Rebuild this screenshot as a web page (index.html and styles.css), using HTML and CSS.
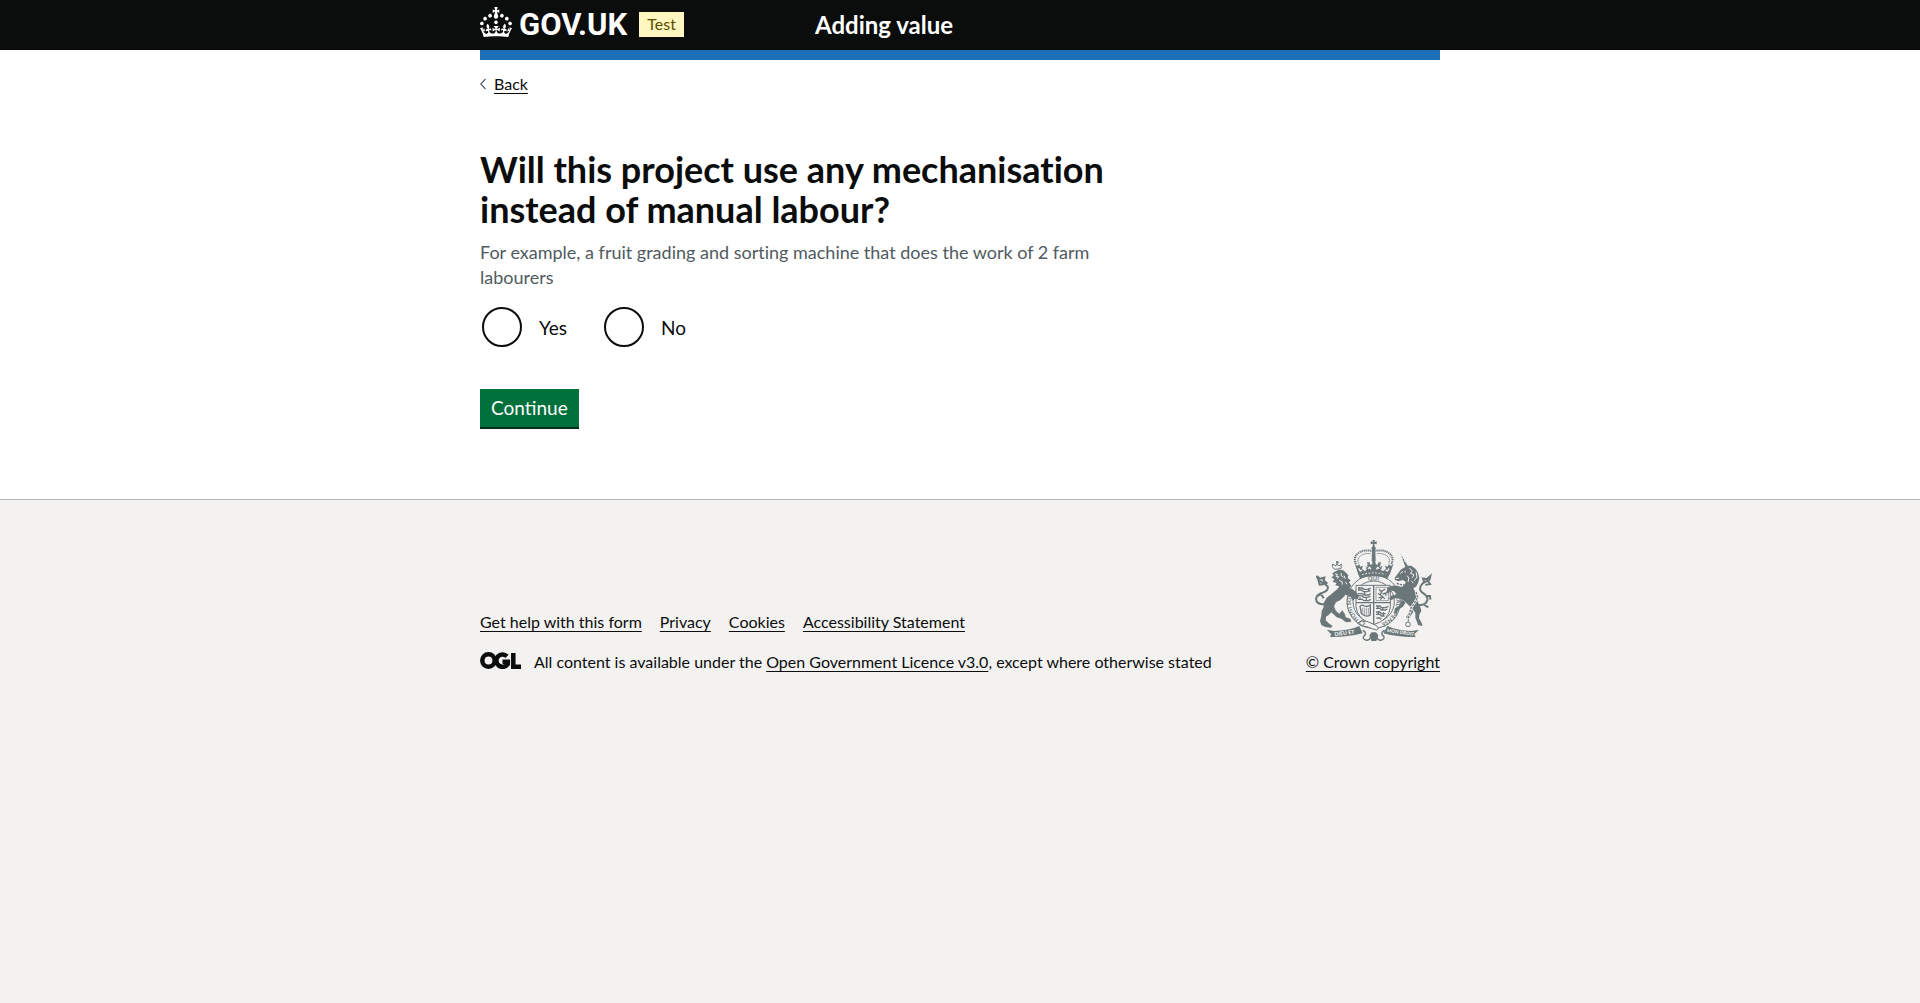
FILE: index.html
```html
<!DOCTYPE html>
<html lang="en">
<head>
  <meta charset="utf-8">
  <meta name="viewport" content="width=device-width, initial-scale=1">
  <title>Will this project use any mechanisation instead of manual labour? - Adding value - GOV.UK</title>
  <link rel="stylesheet" href="styles.css">
</head>
<body>
  <header class="header">
    <div class="container header-bar">
      <div class="header-logo">
        <a class="logo" href="#">
          <svg class="logo-crown" viewBox="0 0 32 30" width="32" height="30" aria-hidden="true"><path fill="currentColor" d="M22.6 10.4c-1 .4-2-.1-2.4-1-.4-.9.1-2 1-2.4.9-.4 2 .1 2.4 1s-.1 2-1 2.4m-5.9 6.7c-.9.4-2-.1-2.4-1-.4-.9.1-2 1-2.4.9-.4 2 .1 2.4 1s-.1 2-1 2.4m10.8-3.7c-1 .4-2-.1-2.4-1-.4-.9.1-2 1-2.4.9-.4 2 .1 2.4 1s0 2-1 2.4m3.3 4.8c-1 .4-2-.1-2.4-1-.4-.9.1-2 1-2.4.9-.4 2 .1 2.4 1s-.1 2-1 2.4M17 4.7l2.3 1.2V2.5l-2.3.7-.2-.2.9-3h-3.4l.9 3-.2.2c-.1.1-2.3-.7-2.3-.7v3.4L15 4.7c.1.1.1.2.2.2l-1.3 4c-.1.2-.1.4-.1.6 0 1.1.8 2 1.9 2.2h.7c1-.2 1.9-1.1 1.9-2.1 0-.2 0-.4-.1-.6l-1.3-4c-.1-.2 0-.2.1-.3m-7.6 5.7c.9.4 2-.1 2.4-1 .4-.9-.1-2-1-2.4-.9-.4-2 .1-2.4 1s0 2 1 2.4m-5 3c.9.4 2-.1 2.4-1 .4-.9-.1-2-1-2.4-.9-.4-2 .1-2.4 1s.1 2 1 2.4m-3.2 4.8c.9.4 2-.1 2.4-1 .4-.9-.1-2-1-2.4-.9-.4-2 .1-2.4 1s0 2 1 2.4m14.8 11c4.4 0 8.6.3 12.3.8 1.1-4.5 2.4-7 3.7-8.8l-2.5-.9c.2 1.3.3 1.9 0 2.7-.4-.4-.8-1.1-1.1-2.3l-1.2 4c.7-.5 1.3-.8 2-.9-1.1 2.5-2.6 3.1-3.5 3-1.1-.2-1.7-1.2-1.5-2.1.3-1.2 1.5-1.5 2.1-.1 1.1-2.3-.8-3-2-2.3 1.9-1.9 2.1-3.5.6-5.6-2.1 1.6-2.1 3.2-1.2 5.5-1.2-1.4-3.2-.6-2.5 1.6.9-1.4 2.1-.5 1.9.8-.2 1.1-1.7 2.1-3.5 1.9-2.7-.2-2.9-2.1-2.9-3.6.7-.1 1.9.5 2.9 1.9l.4-4.3c-1.1 1.1-2.1 1.4-3.2 1.4.4-1.2 2.1-3 2.1-3h-5.4s1.7 1.9 2.1 3c-1.1 0-2.1-.2-3.2-1.4l.4 4.3c1-1.4 2.2-2 2.9-1.9-.1 1.5-.2 3.4-2.9 3.6-1.9.2-3.4-.8-3.5-1.9-.2-1.3 1-2.2 1.9-.8.7-2.3-1.2-3-2.5-1.6.9-2.2.9-3.9-1.2-5.5-1.5 2-1.3 3.7.6 5.6-1.2-.7-3.1 0-2 2.3.6-1.4 1.8-1.1 2.1.1.2.9-.3 1.9-1.5 2.1-.9.2-2.4-.5-3.5-3 .6 0 1.2.3 2 .9l-1.2-4c-.3 1.1-.7 1.9-1.1 2.3-.3-.8-.2-1.4 0-2.7l-2.9.9C1.3 23 2.6 25.5 3.7 30c3.7-.5 7.9-.8 12.3-.8"/></svg>
          <span class="logo-text">GOV.UK</span>
        </a>
        <strong class="tag">Test</strong>
      </div>
      <a class="service-name" href="#">Adding value</a>
    </div>
  </header>

  <div class="container">
    <div class="brand-bar"></div>
    <a class="back-link" href="#">
      <svg width="6" height="12" viewBox="0 0 6 12" aria-hidden="true"><path d="M5.5 1 .8 6l4.700 5" fill="none" stroke="#505a5f" stroke-width="1.100"/></svg>
      <span class="link">Back</span>
    </a>
    <main class="main">
      <form class="question" action="#" method="post">
        <fieldset class="fieldset" aria-describedby="hint">
          <legend class="legend"><h1 class="heading">Will this project use any mechanisation instead of manual labour?</h1></legend>
          <p class="hint" id="hint">For example, a fruit grading and sorting machine that does the work of 2 farm labourers</p>
          <div class="radios">
            <div class="radio">
              <input class="radio-input" type="radio" id="yes" name="mechanisation" value="yes">
              <label class="radio-label" for="yes">Yes</label>
            </div>
            <div class="radio">
              <input class="radio-input" type="radio" id="no" name="mechanisation" value="no">
              <label class="radio-label" for="no">No</label>
            </div>
          </div>
        </fieldset>
        <button class="button" type="submit">Continue</button>
      </form>
    </main>
  </div>

  <footer class="footer">
    <div class="container footer-meta">
      <div class="footer-main">
        <ul class="footer-links">
          <li><a class="link" href="#">Get help with this form</a></li>
          <li><a class="link" href="#">Privacy</a></li>
          <li><a class="link" href="#">Cookies</a></li>
          <li><a class="link" href="#">Accessibility Statement</a></li>
        </ul>
        <div class="licence">
          <svg class="ogl" viewBox="0 0 41 17" width="41" height="17" role="img" aria-label="Open Government Licence">
            <g fill="none" stroke="currentColor" stroke-width="4.500">
              <circle cx="8.500" cy="8.500" r="6.200"/>
              <path d="M27 4.300A6.200 6.200 0 1 0 27.800 12V9.800H22.500"/>
              <path d="M33.300 1v13.700H41"/>
            </g>
          </svg>
          <p class="licence-text">All content is available under the <a class="link" href="#">Open Government Licence v3.0</a>, except where otherwise stated</p>
        </div>
      </div>
      <a class="copyright" href="#">
        <svg class="crest" viewBox="66 45 375 306" width="125" height="102" aria-hidden="true">
          <defs>
            <path id="garter-left" d="M232 294A68 68 0 0 1 208 183"/>
            <path id="garter-top" d="M214 181A68 68 0 0 1 300 181"/>
            <path id="garter-right" d="M315 195A68 68 0 0 1 275 296"/>
          </defs>
          <!-- garter and shield -->
          <g fill="none" stroke="currentColor">
            <circle cx="257" cy="230" r="80" stroke-width="3"/>
            <circle cx="257" cy="230" r="62" stroke-width="3"/>
            <path d="M204 181H307V245Q304 285 257 299Q208 285 204 245Z" fill="#f3f2f1" stroke-width="3"/>
            <path d="M257 181V299M204 233H307" stroke-width="4"/>
            <path d="M264 187H301V227H264Z" stroke-width="2"/>
            <path d="M210 189h13l5 4h14l6-4M210 195h11l5 5h12l9-3M210 206h13l5 4h14l6-4M210 212h11l5 5h12l9-3M210 223h13l5 4h14l6-4M213 186v8M230 200v8M242 190v8M216 217v8M235 220v8" stroke-width="4"/>
            <path d="M264 243h12l4 5h13l8-4M264 250h11l5 5h12l6-3M264 261h12l4 5h13M264 268h11l5 5h10M265 279h10l5 4M270 241v8M284 246v8M271 258v9M286 262v10" stroke-width="4"/>
            <path d="M216 244Q222 237 229 243Q238 247 247 240V270Q233 279 220 265Z" stroke-width="4"/>
            <path d="M223 248V266M229 248V270M235 250V271M241 249V269" stroke-width="2"/>
            <path d="M273 193l8 8l-5 8l8 6l-7 9M279 200l13-8M284 207l10-3l-1 8M280 213l11 8M270 206l7 3M271 219l8-3" stroke-width="4"/>
          </g>
          <g fill="currentColor" font-family="Lato, sans-serif" font-weight="700" font-size="17">
            <text><textPath href="#garter-left" startOffset="22">HONI SOIT</textPath></text>
            <text><textPath href="#garter-top" startOffset="30">QUI</textPath></text>
            <text><textPath href="#garter-right" startOffset="14">MAL Y PENSE</textPath></text>
          </g>
          <path d="M208 294Q220 284 237 289L263 301Q278 309 265 315Q250 311 240 306L219 302Z" fill="#f3f2f1" stroke="currentColor" stroke-width="3"/>
          <circle cx="222" cy="294" r="7" fill="none" stroke="currentColor" stroke-width="3"/>
          <!-- royal crown -->
          <g fill="currentColor">
            <path d="M211 147Q257 133 304 147L299 161Q257 147 216 161Z"/>
            <path d="M211 149L201 118l8 5 4-7 4 9 8-3-3 9 7 7 7-10-4-3 7-6-2-7h8l1 7 7-1v-7h10v7l7 1 1-7h8l-2 7 7 6-4 3 7 10 7-7-3-9 8 3 4-9 4 7 9-5-11 31Q257 132 211 149Z"/>
            <path d="M253 45h8l-2 6 7-2v9l-7-2 1 8q6 5 2 11l1 32-6 8-6-8 1-32q-4-6 2-11l1-8-7 2v-9l7 2Z"/>
          </g>
          <g fill="none" stroke="currentColor">
            <path d="M204 117C190 92 218 70 252 78M310 117C324 92 296 70 262 78" stroke-width="6" stroke-dasharray="4 2"/>
            <path d="M212 115C202 97 225 82 248 86M302 115C312 97 289 82 266 86" stroke-width="2"/>
          </g>
          <path d="M222 149Q257 139 292 149" fill="none" stroke="#f3f2f1" stroke-width="3" stroke-dasharray="5 5"/>
          <path d="M212 130l5 8 5-3M240 131l5-4 4 6M303 130l-5 8-5-3M274 131l-5-4-4 6M233 120l5 5M281 120l-5 5M229 137l6-5M285 137l-6-5" fill="none" stroke="#f3f2f1" stroke-width="4"/>
          <!-- lion -->
          <g fill="currentColor">
            <path d="M140 140L152 134 166 136 174 143 181 151 179 159 188 166 183 172 190 182 184 190 194 193 207 204 213 213 209 223 199 221 194 227 187 214 172 209 168 215 156 226 144 232 138 244 144 258 154 266 163 256 171 268 173 277 187 281 190 290 174 292 160 281 146 277 130 262 122 270 114 275 113 286 122 295 134 303 129 308 112 306 100 300 96 288 100 272 101 258 107 246 106 236 116 218 134 204 148 192 154 184 142 181 146 173 134 171 139 163 130 157 137 152 133 145Z"/>
            <circle cx="148" cy="112" r="4"/>
          </g>
          <path d="M134 117l9 6 4-7 5 7 8-6-1 14-20 2-6-8Z" fill="none" stroke="currentColor" stroke-width="3"/>
          <path d="M140 147l9 1-5 6 8 1-4 6M159 144l1 8 6 5M168 152l4 9M154 166l9 5-1 8M172 171l5 7" fill="none" stroke="#f3f2f1" stroke-width="3"/>
          <path d="M110 238Q85 239 84 221Q87 207 104 203Q124 196 119 184Q110 174 95 168M93 168l-7-15 10 8 13-3-2 8 11 10M92 168l3 11 12-1M84 215l16-8M101 210l6 10" fill="none" stroke="currentColor" stroke-width="6"/>
          <!-- unicorn -->
          <g fill="currentColor">
            <path d="M352 125L337 85 359 122 370 122 382 131 390 143 394 160 390 175 384 185 376 190 382 202 386 218 390 232 397 246 400 257 394 269 393 280 400 292 404 303 390 300 386 288 382 278 382 264 374 252 362 241 350 229 336 221 322 219 309 226 303 221 309 213 326 208 318 199 308 196 301 206 295 202 299 187 312 182 328 182 340 186 350 180 353 170 344 165 332 169 321 165 320 158 329 147 338 134Z"/>
            <path d="M341 224L353 232 345 245 330 254 326 266 318 264 321 250 336 240Z"/>
            <path d="M368 246L376 260 366 276 358 282 354 276 363 264Z"/>
          </g>
          <path d="M339 93l6-3M343 101l7-3M347 109l7-3M337 146l8-7M349 140l5 1M364 129l9 9-6 7 11 4-5 9M384 141l3 15-8 11M357 152l6 7-3 12M324 161l9-2M370 168l8 8" fill="none" stroke="#f3f2f1" stroke-width="3"/>
          <path d="M393 240Q414 241 418 225Q420 213 403 203Q390 192 401 179Q407 171 424 166M424 166l3-13-10 9-12-1 3 8M420 169l6 8-14 2M415 212l11 1 1 11M409 240l12 7" fill="none" stroke="currentColor" stroke-width="6"/>
          <path d="M384 201l5 16-9 16-11 16-6 20-2 20" fill="none" stroke="#f3f2f1" stroke-width="8"/>
          <path d="M326 175l17 5 20-1 17-3M384 201l5 16-9 16-11 16-6 20-2 20" fill="none" stroke="currentColor" stroke-width="4" stroke-dasharray="7 3"/>
          <circle cx="360" cy="298" r="7" fill="#f3f2f1" stroke="currentColor" stroke-width="3"/>
          <!-- motto scroll -->
          <path d="M116 314L138 318Q185 316 214 303L224 325Q170 338 126 336L130 328ZM393 314L371 318Q326 316 298 303L286 325Q338 338 383 336L379 328Z" fill="currentColor"/>
          <g fill="#f3f2f1" font-family="Lato, sans-serif" font-weight="900">
            <text x="140" y="334" transform="rotate(-8 140 334)" font-size="16">DIEU ET</text>
            <text x="296" y="321" transform="rotate(8 296 321)" font-size="14">MON DROIT</text>
          </g>
          <path d="M224 316q10 3 8 13q-9 6-5 12q8 8 17 2l8-14h10l8 14q9 6 17-2q4-6-5-12q-2-10 8-13" fill="none" stroke="currentColor" stroke-width="4"/>
          <path d="M244 331l7-9h13l7 9-6 17h-15Z" fill="currentColor"/>
        </svg>
        <span class="link">© Crown copyright</span>
      </a>
    </div>
  </footer>
</body>
</html>
```
FILE: styles.css
```css
* {
  box-sizing: border-box;
}

html {
  background: #f3f2f1;
}

body {
  margin: 0;
  background: #fff;
  color: #0b0c0c;
  font-family: Lato, "Liberation Sans", sans-serif;
  font-size: 16px;
  font-variant-ligatures: none;
  line-height: 20px;
}

a {
  color: inherit;
  text-decoration: none;
}

.link {
  text-decoration: underline;
  text-decoration-thickness: 1px;
  text-decoration-skip-ink: none;
  text-underline-offset: 3px;
}

.container {
  max-width: 960px;
  margin: 0 auto;
}

.header {
  background: #0b0c0c;
  color: #fff;
}

.header-bar {
  display: grid;
  grid-template-columns: 335px 1fr;
  align-items: center;
  min-height: 50px;
}

.header-logo,
.logo {
  display: flex;
  align-items: center;
}

.header-logo {
  gap: 12px;
}

.logo {
  gap: 7px;
}

.logo-crown {
  margin-bottom: 6px;
}

.logo-text {
  font-family: Roboto, sans-serif;
  font-size: 31px;
  font-weight: 700;
  line-height: 30px;
}

.tag {
  margin-bottom: 2px;
  padding: 2px 8px 3px;
  background: #fff7bf;
  color: #594d00;
  font-weight: 400;
}

.service-name {
  font-size: 24px;
  font-weight: 700;
  line-height: 30px;
}

.brand-bar {
  height: 10px;
  background: #1d70b8;
}

.back-link {
  display: inline-flex;
  align-items: center;
  gap: 8px;
  margin-top: 14px;
}

.main {
  padding: 55px 0 72px;
}

.question {
  max-width: 630px;
}

.fieldset {
  margin: 0 0 40px;
  padding: 0;
  border: 0;
}

.legend {
  padding: 0;
}

.heading {
  margin: 0 0 11px;
  font-size: 36px;
  font-weight: 700;
  line-height: 40px;
}

.hint {
  margin: 0 0 15px;
  color: #505a5f;
  font-size: 18px;
  line-height: 25px;
}

.radios {
  display: flex;
  flex-wrap: wrap;
  gap: 20px;
}

.radio {
  display: flex;
  align-items: center;
  padding-left: 2px;
}

.radio-input {
  appearance: none;
  width: 40px;
  height: 40px;
  margin: 2px;
  margin-left: 0;
  border: 2px solid #0b0c0c;
  border-radius: 50%;
  background: #fff;
}

.radio-input:checked {
  box-shadow: inset 0 0 0 8px #fff;
  background: #0b0c0c;
}

.radio-label {
  padding: 0 15px;
  font-size: 19px;
  line-height: 25px;
}

.button {
  display: block;
  padding: 9px 11px 10px;
  border: 0;
  background: #00703c;
  box-shadow: 0 2px 0 #002d18;
  color: #fff;
  font-family: inherit;
  font-size: 19px;
  line-height: 19px;
}

.footer {
  padding: 40px 0 60px;
  border-top: 1px solid #b1b4b6;
  background: #f3f2f1;
}

.footer-meta {
  display: flex;
  justify-content: space-between;
  align-items: flex-end;
}

.footer-links {
  display: flex;
  flex-wrap: wrap;
  gap: 18px;
  margin: 0 0 20px;
  padding: 0;
  list-style: none;
}

.licence {
  display: flex;
  gap: 13px;
}

.licence-text {
  margin: 0;
}

.copyright {
  display: flex;
  flex-direction: column;
  align-items: center;
  gap: 10px;
}

.crest {
  color: #6b7678;
}
```
